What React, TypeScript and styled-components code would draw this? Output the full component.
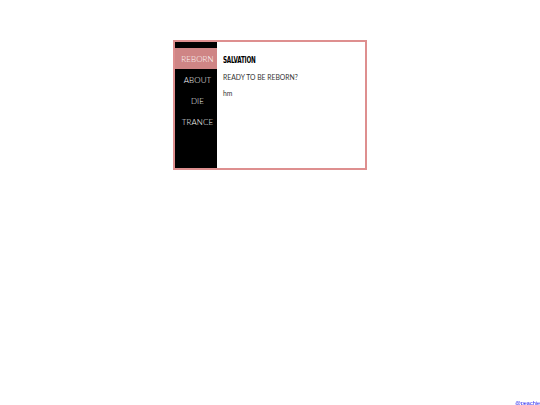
import React from 'react'
import styled, { createGlobalStyle } from 'styled-components'

const GlobalStyle = createGlobalStyle`
  html, body {
    margin: 0;
    padding: 0;
    background: #fff;
    font-family: 'Lato', 'Open Sans', sans-serif;
  }
`

const Page = styled.div`
  display: flex;
  justify-content: center;
  padding-top: 40px;
  height: 405px;
  box-sizing: border-box;
`

const Frame = styled.div`
  box-sizing: border-box;
  width: 194px;
  height: 130px;
  border: 2px solid #de8f8f;
  display: flex;
  background: #fff;
`

const Sidebar = styled.nav`
  width: 42px;
  background: #000;
  display: flex;
  flex-direction: column;
  padding-top: 6px;
`

const NavItem = styled.div<{ $active?: boolean }>`
  height: 21px;
  display: flex;
  align-items: center;
  justify-content: center;
  padding-left: 3px;
  font-size: 8px;
  font-weight: 300;
  letter-spacing: 0.1px;
  color: #fff;
  background: ${(p) => (p.$active ? '#cf8585' : 'transparent')};
`

const Content = styled.main`
  flex: 1;
  padding: 13px 6px;
  color: #222;
`

const Title = styled.h1`
  margin: 0 0 8px;
  font-family: 'DejaVu Sans Condensed', 'DejaVu Sans', sans-serif;
  font-weight: bold;
  font-size: 8.5px;
  letter-spacing: -0.3px;
  color: #000;
  transform: scaleX(0.74);
  transform-origin: left;
`

const Para = styled.p`
  margin: 0 0 8px;
  font-size: 6.8px;
  font-weight: 400;
  color: #333;
`

const Credit = styled.a`
  position: fixed;
  right: 0;
  bottom: -1px;
  font-size: 5.5px;
  color: #2222ee;
  text-decoration: underline;
  font-family: 'Liberation Sans', sans-serif;
`

const items = ['REBORN', 'ABOUT', 'DIE', 'TRANCE']

const App: React.FC = () => {
  return (
    <>
      <GlobalStyle />
      <Page>
        <Frame>
          <Sidebar>
            {items.map((item, i) => (
              <NavItem key={item} $active={i === 0}>
                {item}
              </NavItem>
            ))}
          </Sidebar>
          <Content>
            <Title>SALVATION</Title>
            <Para>READY TO BE REBORN?</Para>
            <Para>hm</Para>
          </Content>
        </Frame>
      </Page>
      <Credit href="#">@peachie</Credit>
    </>
  )
}

export default App
